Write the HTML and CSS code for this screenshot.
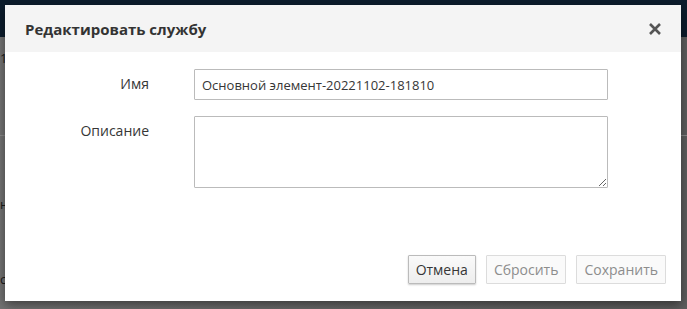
FILE: index.html
```html
<!DOCTYPE html>
<html>
<head>
<meta charset="utf-8">
<link rel="stylesheet" href="styles.css">
</head>
<body>
<div class="page">
  <div class="topbar"></div>
  <div class="content">
    <div class="row r1">1</div>
    <div class="divider"></div>
    <div class="row r2">н</div>
    <div class="row r3">с</div>
  </div>
</div>
<div class="modal">
  <div class="modal-header">
    <h4 class="modal-title">Редактировать службу</h4>
    <button class="close" aria-label="Закрыть">
      <svg width="14" height="14" viewBox="0 0 14 14"><path d="M2 2 L12 12 M12 2 L2 12" stroke="#555" stroke-width="2.6" stroke-linecap="butt"/></svg>
    </button>
  </div>
  <div class="modal-body">
    <form class="form">
      <label class="label l-name">Имя</label>
      <input class="field" type="text" value="Основной элемент-20221102-181810">
      <label class="label l-desc">Описание</label>
      <textarea class="field area"></textarea>
    </form>
  </div>
  <div class="modal-footer">
    <button class="btn btn-cancel">Отмена</button>
    <button class="btn btn-disabled" disabled>Сбросить</button>
    <button class="btn btn-disabled" disabled>Сохранить</button>
  </div>
</div>
</body>
</html>
```

FILE: styles.css
```css
html, body {
  margin: 0;
  padding: 0;
  width: 687px;
  height: 309px;
  overflow: hidden;
  font-family: "Open Sans", "Noto Sans", sans-serif;
}
.page {
  height: 309px;
  display: flex;
  flex-direction: column;
  background: #6b6b6b;
}
.topbar {
  height: 37px;
  background: #0c1c2c;
}
.content {
  flex: 1;
  display: flex;
  flex-direction: column;
  color: #1a1a1a;
  font-size: 13px;
  background: linear-gradient(to right, #737373, #5e5e5e);
}
.row { padding-left: 0; line-height: 16px; }
.r1 { margin-top: 13px; }
.divider { margin-top: 69px; height: 1px; background: #8a8a8a; }
.r2 { margin-top: 60px; }
.r3 { margin-top: 59px; }

.modal {
  position: absolute;
  left: 5px;
  top: 5px;
  width: 676px;
  height: 296px;
  background: #fff;
  box-shadow: 0 4px 10px rgba(0,0,0,0.45);
  display: flex;
  flex-direction: column;
}
.modal-header {
  height: 47px;
  background: #f4f4f4;
  display: flex;
  align-items: center;
  justify-content: space-between;
  padding: 0 19px 0 20px;
  box-sizing: border-box;
}
.modal-title {
  margin: 0;
  font-size: 15px;
  font-weight: 700;
  color: #333;
  padding-top: 1px;
}
.close {
  border: 0;
  background: none;
  padding: 0;
  width: 14px;
  height: 14px;
  display: flex;
}
.modal-body {
  flex: 1;
  padding-top: 17px;
}
.form {
  display: grid;
  grid-template-columns: 144px 414px;
  column-gap: 45px;
  row-gap: 16px;
  margin: 0;
}
.label {
  text-align: right;
  font-size: 14px;
  color: #363636;
  line-height: 18px;
  padding-top: 6px;
}
.field {
  box-sizing: border-box;
  width: 414px;
  height: 31px;
  border: 1px solid #bbb;
  border-radius: 1px;
  padding: 0 7px;
  font-family: "Open Sans", "Noto Sans", sans-serif;
  font-size: 13px;
  color: #363636;
  margin: 0;
}
.area {
  height: 72px;
  resize: both;
}
.modal-footer {
  display: flex;
  justify-content: flex-end;
  gap: 10px;
  padding: 0 15px 17px 0;
}
.btn {
  font-family: "Open Sans", "Noto Sans", sans-serif;
  font-size: 14px;
  height: 29px;
  padding: 0 7px;
  border-radius: 1px;
  margin: 0;
}
.btn-cancel {
  color: #363636;
  background: linear-gradient(#fafafa, #ededed);
  border: 1px solid #bbb;
  box-shadow: 0 1px 2px rgba(0,0,0,0.2);
}
.btn-disabled {
  color: #8d8d8d;
  background: #fafafa;
  border: 1px solid #dcdcdc;
}
```
